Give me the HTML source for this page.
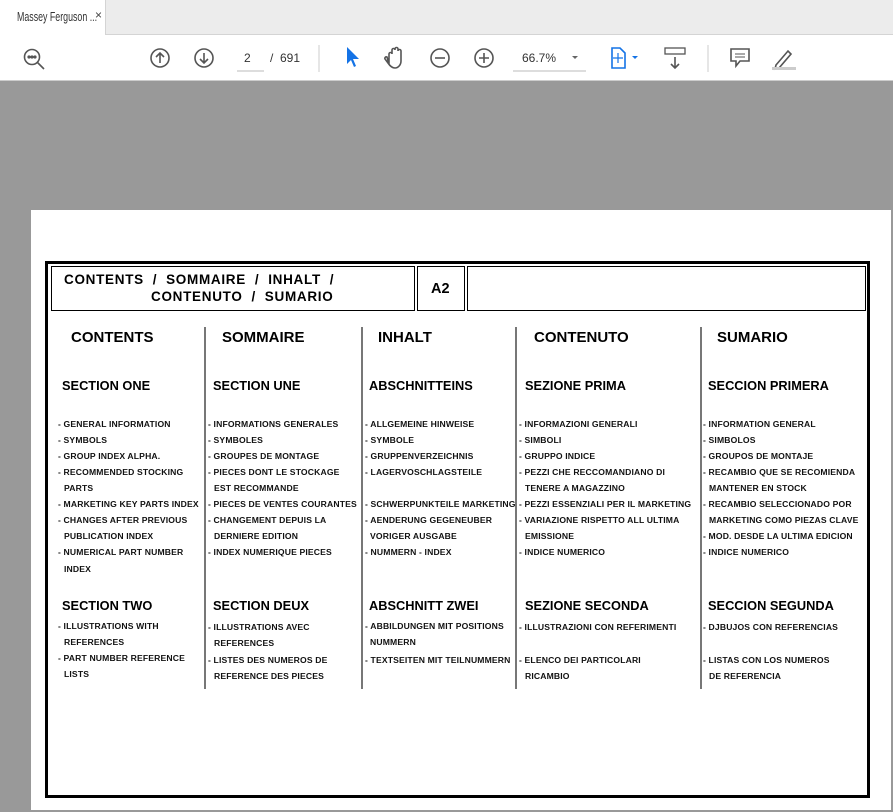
<!DOCTYPE html>
<html><head><meta charset="utf-8"><style>
*{margin:0;padding:0;box-sizing:border-box}
body{width:893px;height:812px;overflow:hidden;background:#999;font-family:"Liberation Sans",Arial,sans-serif;position:relative}
.a{position:absolute}
.t{position:absolute;font-size:8.6px;font-weight:bold;line-height:12px;white-space:nowrap;color:#111;letter-spacing:0.15px}
.h{position:absolute;font-size:15px;font-weight:bold;line-height:18px;white-space:nowrap;color:#000}
.s{position:absolute;font-size:12.8px;font-weight:bold;line-height:16px;white-space:nowrap;color:#000}
.v{position:absolute;width:2px;background:#777;top:327px;height:362px}
</style></head><body>
<div class="a" style="left:0;top:0;width:893px;height:35px;background:#ececec"></div>
<div class="a" style="left:0;top:0;width:106px;height:35px;background:#fff;border-right:1px solid #d4d4d4"></div>
<div class="a" style="left:106px;top:34px;width:787px;height:1px;background:#d4d4d4"></div>
<div class="a" style="left:17px;top:9px;font-size:13px;color:#333;white-space:nowrap;transform:scaleX(0.68);transform-origin:left top">Massey Ferguson ...</div>
<div class="a" style="left:95px;top:8px;font-size:12px;color:#444">×</div>
<div class="a" style="left:0;top:35px;width:893px;height:46px;background:#fff"></div>
<svg class="a" style="left:0;top:35px" width="893" height="46" viewBox="0 35 893 46" fill="none" stroke="#555" stroke-width="1.6">
<circle cx="32" cy="57" r="7.5"/><line x1="37.5" y1="62.5" x2="44" y2="69"/><circle cx="29" cy="57" r=".8" fill="#555"/><circle cx="32" cy="57" r=".8" fill="#555"/><circle cx="35" cy="57" r=".8" fill="#555"/>
<circle cx="160" cy="58" r="9"/><path d="M160 63V53M156 57l4-4 4 4"/>
<circle cx="204" cy="58" r="9"/><path d="M204 53v10M200 59l4 4 4-4"/>
<line x1="237" y1="71" x2="264" y2="71" stroke="#bbb" stroke-width="1"/>
<line x1="319" y1="45" x2="319" y2="72" stroke="#ccc" stroke-width="1"/>
<path d="M347 47l0 17 4-4 3 7 2-1-3-7 6 0z" fill="#1473e6" stroke="none"/>
<path d="M389 64v-10a1.5 1.5 0 013 0v-4a1.5 1.5 0 013 0v-1a1.5 1.5 0 013 0v2a1.5 1.5 0 013 0v10c0 4-3 7-6 7s-5-2-7-5l-3-4a1.5 1.5 0 012-2z"/>
<circle cx="440" cy="58" r="9"/><line x1="435" y1="58" x2="445" y2="58"/>
<circle cx="484" cy="58" r="9"/><path d="M479 58h10M484 53v10"/>
<line x1="513" y1="71" x2="586" y2="71" stroke="#bbb" stroke-width="1"/>
<path d="M572 56l3 3 3-3z" fill="#666" stroke="none"/>
<path d="M612 48h8l5 5v15h-13z" stroke="#1473e6"/><path d="M618 53v10M613 58h10" stroke="#1473e6" stroke-width="1.2"/>
<path d="M632 56l3 3 3-3z" fill="#1473e6" stroke="none"/>
<rect x="665" y="48" width="20" height="6" stroke-width="1.3"/><path d="M675 57v11M671 64l4 4 4-4"/>
<line x1="708" y1="45" x2="708" y2="72" stroke="#ccc" stroke-width="1"/>
<path d="M731 49h18v12h-9l-4 5v-5h-5z"/><path d="M735 54h10M735 57h10" stroke-width="1"/>
<path d="M776 65l12-14 3 3-12 14-4 1z"/><rect x="772" y="67" width="24" height="3" fill="#ccc" stroke="none"/>
</svg>
<div class="a" style="left:244px;top:51px;font-size:12px;color:#333">2</div>
<div class="a" style="left:270px;top:51px;font-size:12px;color:#333">/&nbsp; 691</div>
<div class="a" style="left:522px;top:51px;font-size:12px;color:#333">66.7%</div>
<div class="a" style="left:0;top:80px;width:893px;height:1px;background:#ccc"></div>

<div class="a" style="left:31px;top:210px;width:860px;height:600px;background:#fff"></div>
<div class="a" style="left:45px;top:261px;width:825px;height:537px;border:3px solid #000"></div>
<div class="a" style="left:51px;top:266px;width:364px;height:45px;border:1.5px solid #000"></div>
<div class="a" style="left:417px;top:266px;width:48px;height:45px;border:1.5px solid #000"></div>
<div class="a" style="left:467px;top:266px;width:399px;height:45px;border:1.5px solid #000"></div>
<div class="s" style="left:64px;top:272px;font-size:13.5px;letter-spacing:.7px">CONTENTS&nbsp; /&nbsp; SOMMAIRE&nbsp; /&nbsp; INHALT&nbsp; /</div>
<div class="s" style="left:151px;top:289px;font-size:13.5px;letter-spacing:.7px">CONTENUTO&nbsp; /&nbsp; SUMARIO</div>
<div class="s" style="left:431px;top:281px;font-size:14.5px">A2</div>

<div class="v" style="left:204px"></div><div class="v" style="left:361px"></div><div class="v" style="left:515px"></div><div class="v" style="left:700px"></div>

<div class="h" style="left:71px;top:329px">CONTENTS</div>
<div class="h" style="left:222px;top:329px">SOMMAIRE</div>
<div class="h" style="left:378px;top:329px">INHALT</div>
<div class="h" style="left:534px;top:329px">CONTENUTO</div>
<div class="h" style="left:717px;top:329px">SUMARIO</div>

<div class="s" style="left:62px;top:378px">SECTION ONE</div>
<div class="s" style="left:213px;top:378px">SECTION UNE</div>
<div class="s" style="left:369px;top:378px">ABSCHNITTEINS</div>
<div class="s" style="left:525px;top:378px">SEZIONE PRIMA</div>
<div class="s" style="left:708px;top:378px">SECCION PRIMERA</div>

<div class="t" style="left:58px;top:418px">- GENERAL INFORMATION</div>
<div class="t" style="left:58px;top:434px">- SYMBOLS</div>
<div class="t" style="left:58px;top:450px">- GROUP INDEX ALPHA.</div>
<div class="t" style="left:58px;top:466px">- RECOMMENDED STOCKING</div>
<div class="t" style="left:64px;top:482px">PARTS</div>
<div class="t" style="left:58px;top:498px">- MARKETING KEY PARTS INDEX</div>
<div class="t" style="left:58px;top:514px">- CHANGES AFTER PREVIOUS</div>
<div class="t" style="left:64px;top:530px">PUBLICATION INDEX</div>
<div class="t" style="left:58px;top:546px">- NUMERICAL PART NUMBER</div>
<div class="t" style="left:64px;top:563px">INDEX</div>

<div class="t" style="left:208px;top:418px">- INFORMATIONS GENERALES</div>
<div class="t" style="left:208px;top:434px">- SYMBOLES</div>
<div class="t" style="left:208px;top:450px">- GROUPES DE MONTAGE</div>
<div class="t" style="left:208px;top:466px">- PIECES DONT LE STOCKAGE</div>
<div class="t" style="left:214px;top:482px">EST RECOMMANDE</div>
<div class="t" style="left:208px;top:498px">- PIECES DE VENTES COURANTES</div>
<div class="t" style="left:208px;top:514px">- CHANGEMENT DEPUIS LA</div>
<div class="t" style="left:214px;top:530px">DERNIERE EDITION</div>
<div class="t" style="left:208px;top:546px">- INDEX NUMERIQUE PIECES</div>

<div class="t" style="left:365px;top:418px">- ALLGEMEINE HINWEISE</div>
<div class="t" style="left:365px;top:434px">- SYMBOLE</div>
<div class="t" style="left:365px;top:450px">- GRUPPENVERZEICHNIS</div>
<div class="t" style="left:365px;top:466px">- LAGERVOSCHLAGSTEILE</div>
<div class="t" style="left:365px;top:498px">- SCHWERPUNKTEILE MARKETING</div>
<div class="t" style="left:365px;top:514px">- AENDERUNG GEGENEUBER</div>
<div class="t" style="left:370px;top:530px">VORIGER AUSGABE</div>
<div class="t" style="left:365px;top:546px">- NUMMERN - INDEX</div>

<div class="t" style="left:519px;top:418px">- INFORMAZIONI GENERALI</div>
<div class="t" style="left:519px;top:434px">- SIMBOLI</div>
<div class="t" style="left:519px;top:450px">- GRUPPO INDICE</div>
<div class="t" style="left:519px;top:466px">- PEZZI CHE RECCOMANDIANO DI</div>
<div class="t" style="left:525px;top:482px">TENERE A MAGAZZINO</div>
<div class="t" style="left:519px;top:498px">- PEZZI ESSENZIALI PER IL MARKETING</div>
<div class="t" style="left:519px;top:514px">- VARIAZIONE RISPETTO ALL ULTIMA</div>
<div class="t" style="left:525px;top:530px">EMISSIONE</div>
<div class="t" style="left:519px;top:546px">- INDICE NUMERICO</div>

<div class="t" style="left:703px;top:418px">- INFORMATION GENERAL</div>
<div class="t" style="left:703px;top:434px">- SIMBOLOS</div>
<div class="t" style="left:703px;top:450px">- GROUPOS DE MONTAJE</div>
<div class="t" style="left:703px;top:466px">- RECAMBIO QUE SE RECOMIENDA</div>
<div class="t" style="left:709px;top:482px">MANTENER EN STOCK</div>
<div class="t" style="left:703px;top:498px">- RECAMBIO SELECCIONADO POR</div>
<div class="t" style="left:709px;top:514px">MARKETING COMO PIEZAS CLAVE</div>
<div class="t" style="left:703px;top:530px">- MOD. DESDE LA ULTIMA EDICION</div>
<div class="t" style="left:703px;top:546px">- INDICE NUMERICO</div>

<div class="s" style="left:62px;top:598px">SECTION TWO</div>
<div class="s" style="left:213px;top:598px">SECTION DEUX</div>
<div class="s" style="left:369px;top:598px">ABSCHNITT ZWEI</div>
<div class="s" style="left:525px;top:598px">SEZIONE SECONDA</div>
<div class="s" style="left:708px;top:598px">SECCION SEGUNDA</div>

<div class="t" style="left:58px;top:620px">- ILLUSTRATIONS WITH</div>
<div class="t" style="left:64px;top:636px">REFERENCES</div>
<div class="t" style="left:58px;top:652px">- PART NUMBER REFERENCE</div>
<div class="t" style="left:64px;top:668px">LISTS</div>

<div class="t" style="left:208px;top:621px">- ILLUSTRATIONS AVEC</div>
<div class="t" style="left:214px;top:637px">REFERENCES</div>
<div class="t" style="left:208px;top:654px">- LISTES DES NUMEROS DE</div>
<div class="t" style="left:214px;top:670px">REFERENCE DES PIECES</div>

<div class="t" style="left:365px;top:620px">- ABBILDUNGEN MIT POSITIONS</div>
<div class="t" style="left:370px;top:636px">NUMMERN</div>
<div class="t" style="left:365px;top:654px">- TEXTSEITEN MIT TEILNUMMERN</div>

<div class="t" style="left:519px;top:621px">- ILLUSTRAZIONI CON REFERIMENTI</div>
<div class="t" style="left:519px;top:654px">- ELENCO DEI PARTICOLARI</div>
<div class="t" style="left:525px;top:670px">RICAMBIO</div>

<div class="t" style="left:703px;top:621px">- DJBUJOS CON REFERENCIAS</div>
<div class="t" style="left:703px;top:654px">- LISTAS CON LOS NUMEROS</div>
<div class="t" style="left:709px;top:670px">DE REFERENCIA</div>
</body></html>
